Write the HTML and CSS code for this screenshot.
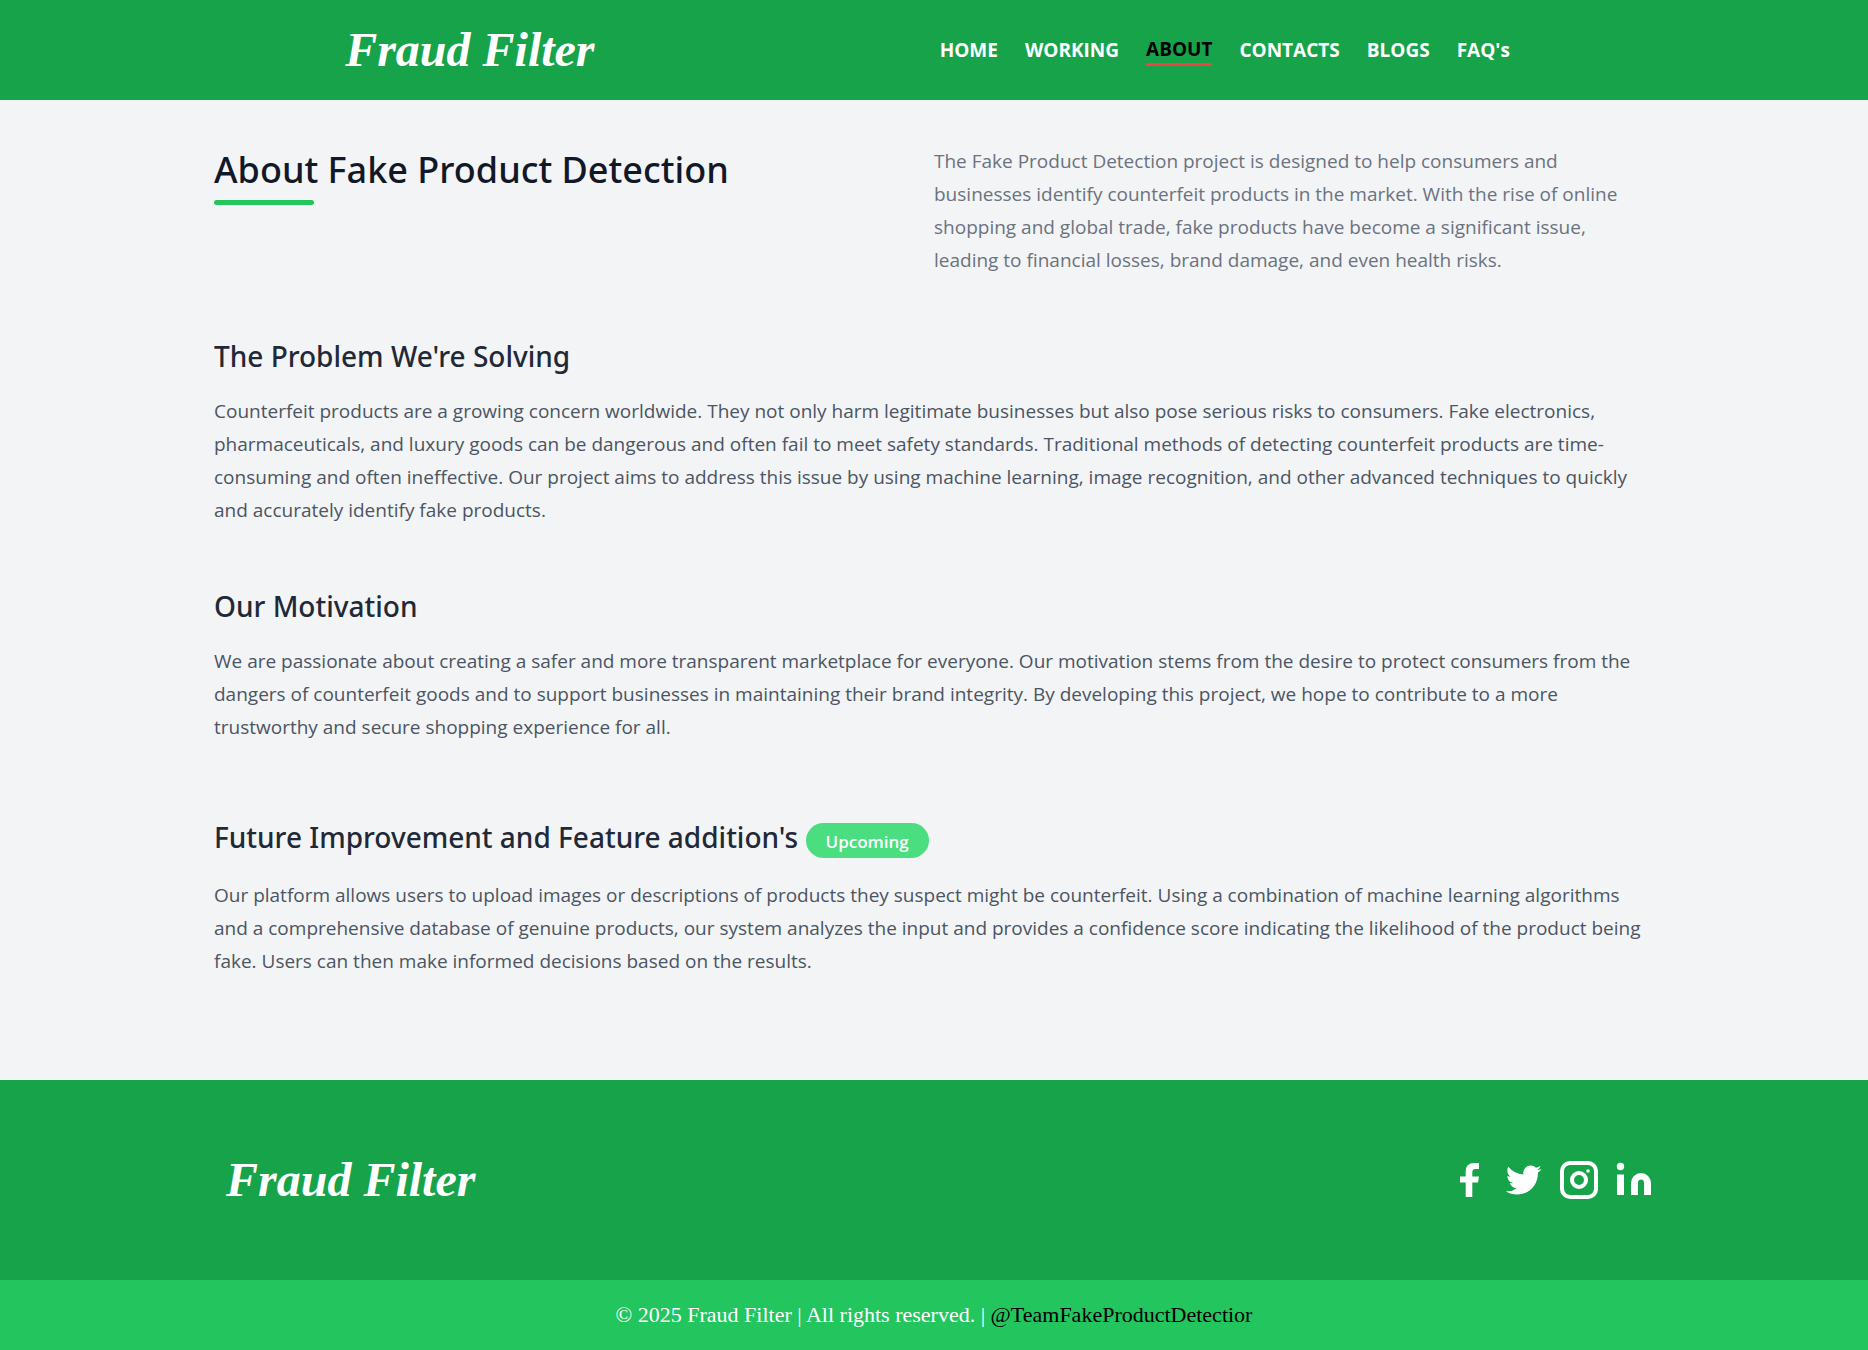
FILE: index.html
```html
<!DOCTYPE html>
<html lang="en">
<head>
<meta charset="utf-8">
<meta name="viewport" content="width=device-width, initial-scale=1">
<title>About | Fraud Filter</title>
<link rel="stylesheet" href="styles.css">
</head>
<body>
<header class="header">
  <a class="logo" href="#">Fraud Filter</a>
  <nav class="nav">
    <a href="#">HOME</a>
    <a href="#">WORKING</a>
    <a class="active" href="#" aria-current="page">ABOUT</a>
    <a href="#">CONTACTS</a>
    <a href="#">BLOGS</a>
    <a href="#">FAQ's</a>
  </nav>
</header>
<main class="container main">
  <div class="intro">
    <div>
      <h1>About Fake Product Detection</h1>
      <div class="accent"></div>
    </div>
    <p>The Fake Product Detection project is designed to help consumers and businesses identify counterfeit products in the market. With the rise of online shopping and global trade, fake products have become a significant issue, leading to financial losses, brand damage, and even health risks.</p>
  </div>
  <section>
    <h2>The Problem We're Solving</h2>
    <p>Counterfeit products are a growing concern worldwide. They not only harm legitimate businesses but also pose serious risks to consumers. Fake electronics, pharmaceuticals, and luxury goods can be dangerous and often fail to meet safety standards. Traditional methods of detecting counterfeit products are time-consuming and often ineffective. Our project aims to address this issue by using machine learning, image recognition, and other advanced techniques to quickly and accurately identify fake products.</p>
  </section>
  <section>
    <h2>Our Motivation</h2>
    <p>We are passionate about creating a safer and more transparent marketplace for everyone. Our motivation stems from the desire to protect consumers from the dangers of counterfeit goods and to support businesses in maintaining their brand integrity. By developing this project, we hope to contribute to a more trustworthy and secure shopping experience for all.</p>
  </section>
  <section class="future">
    <h2>Future Improvement and Feature addition's <span class="badge">Upcoming</span></h2>
    <p>Our platform allows users to upload images or descriptions of products they suspect might be counterfeit. Using a combination of machine learning algorithms and a comprehensive database of genuine products, our system analyzes the input and provides a confidence score indicating the likelihood of the product being fake. Users can then make informed decisions based on the results.</p>
  </section>
</main>
<footer class="footer">
  <div class="container footer-top">
    <a class="logo" href="#">Fraud Filter</a>
    <div class="social">
      <a href="#" aria-label="Facebook"><svg viewBox="0 0 40 40"><path d="M30 3v6h-3.500q-3.200 0-3.200 3.200V16.500H30L29 22.500H23.300V37H16.700V22.500H11V16.500H16.700V11.500Q16.700 3 25 3z"/></svg></a>
      <a href="#" aria-label="Twitter"><svg viewBox="1 1 22 22"><path d="M19.633 7.997c.013.175.013.349.013.523 0 5.325-4.053 11.461-11.460 11.461-2.282 0-4.402-.661-6.186-1.809.324.037.636.050.973.050a8.070 8.070 0 0 0 5.001-1.721 4.036 4.036 0 0 1-3.767-2.793c.249.037.499.062.761.062.361 0 .724-.050 1.061-.137a4.027 4.027 0 0 1-3.230-3.953v-.050c.537.299 1.160.486 1.820.511a4.022 4.022 0 0 1-1.796-3.354c0-.748.199-1.434.548-2.032a11.457 11.457 0 0 0 8.306 4.215c-.062-.300-.100-.611-.100-.923a4.026 4.026 0 0 1 4.028-4.028c1.160 0 2.207.486 2.943 1.272a7.957 7.957 0 0 0 2.556-.973 4.020 4.020 0 0 1-1.771 2.220 8.073 8.073 0 0 0 2.319-.624 8.645 8.645 0 0 1-2.019 2.083z"/></svg></a>
      <a href="#" aria-label="Instagram"><svg viewBox="0 0 40 40"><rect class="line" x="3" y="3" width="34" height="34" rx="8"/><circle class="line" cx="20" cy="20" r="7"/><circle cx="29" cy="11" r="1.800"/></svg></a>
      <a href="#" aria-label="LinkedIn"><svg viewBox="0 0 40 40"><circle cx="6.500" cy="6.500" r="3.700"/><path d="M3 14.500h7V35H3zM17 35V23a10 10 0 0 1 20 0V35H30V23a3 3.500 0 0 0-6 0V35z"/></svg></a>
    </div>
  </div>
  <div class="copyright">
    <p>© 2025 Fraud Filter | All rights reserved. | <a href="#">@TeamFakeProductDetectior</a></p>
  </div>
</footer>
</body>
</html>
```
FILE: styles.css
```css
* { box-sizing: border-box; }
body {
  margin: 0;
  background: #f3f4f6;
  font-family: "Segoe UI", "Open Sans", sans-serif;
  font-size: 19px;
  line-height: 33px;
}
h1, h2, p { margin: 0; }
h1, h2 { font-family: "Segoe UI", "Noto Sans", sans-serif; font-weight: 500; }
a { color: inherit; text-decoration: none; }
.container { width: 100%; max-width: 1440px; margin: 0 auto; }

.header {
  display: flex;
  flex-wrap: wrap;
  justify-content: space-evenly;
  align-items: center;
  min-height: 100px;
  background: #16a34a;
}
.logo {
  padding: 0 12px;
  color: #fff;
  font: italic bold 48px/60px "Liberation Serif", serif;
}
.nav {
  display: flex;
  flex-wrap: wrap;
  align-items: center;
  gap: 27px;
  padding-right: 25px;
  color: #fff;
  font-weight: 700;
  line-height: 28px;
}
.nav .active { color: #000; border-bottom: 3px solid #ef4444; }

.main { padding: 45px 0 102px; }
.intro { display: grid; grid-template-columns: 1fr 1fr; color: #6b7280; }
h1 { color: #111827; font-size: 36px; line-height: 50px; }
.accent { width: 100px; height: 5px; margin-top: 5px; border-radius: 4px; background: #22c55e; }
section { margin-top: 61px; color: #4b5563; }
.future { margin-top: 75px; }
h2 { margin-bottom: 21px; color: #1f2937; font-size: 28px; line-height: 36px; }
.badge {
  display: inline-block;
  padding: 2px 20px 0;
  border-radius: 18px;
  background: #4ade80;
  color: #fff;
  font-family: "Segoe UI", "Open Sans", sans-serif;
  font-size: 17px;
  font-weight: 600;
  line-height: 33px;
}

.footer { background: #16a34a; color: #fff; }
.footer-top { display: flex; justify-content: space-between; align-items: center; min-height: 200px; }
.social { display: flex; gap: 15px; }
.social svg { display: block; width: 40px; height: 40px; fill: #fff; }
.social .line { fill: none; stroke: #fff; stroke-width: 4px; }
.copyright {
  padding: 18px 20px 19px;
  background: #22c55e;
  font-family: Georgia, "Liberation Serif", serif;
  font-size: 22px;
  text-align: center;
}
.copyright a { color: #000; }
```
